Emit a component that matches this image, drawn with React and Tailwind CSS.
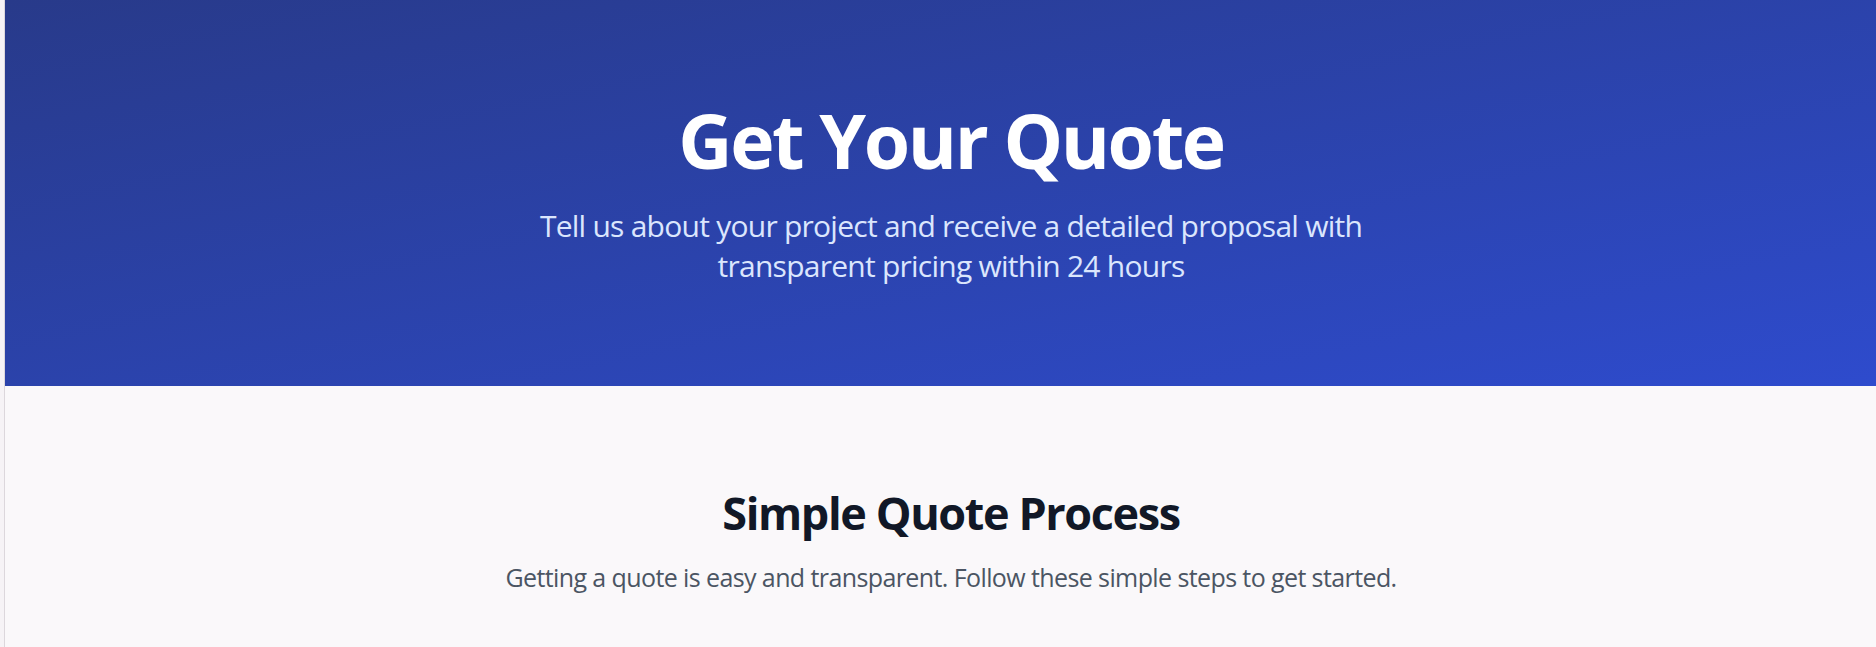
export default function App() {
  return (
    <div className="flex min-h-[647px] bg-[#faf8fa]" style={{ fontFamily: '"Open Sans", "Noto Sans", sans-serif' }}>
      <div className="w-[4px] shrink-0 bg-[#f6f3f6]" />
      <main className="flex-1 min-w-0 border-l border-[#dcd7dc]">
        <section className="bg-linear-to-br from-[#283a8a] to-[#2e4bcd] pt-[103px] pb-[100px] pl-[21px] text-center">
          <h1 className="text-[75px] leading-[75px] font-bold tracking-[-2.4px] text-white">Get Your Quote</h1>
          <p className="mx-auto mt-[28px] max-w-[840px] text-[30px] leading-[40px] tracking-[-0.75px] text-[#dbe6fd]">
            Tell us about your project and receive a detailed proposal with transparent pricing within 24 hours
          </p>
        </section>
        <section className="pt-[102px] pb-[60px] pl-[21px] text-center">
          <h2 className="text-[45px] leading-[50px] font-bold tracking-[-1.4px] text-[#111827]">Simple Quote Process</h2>
          <p className="mt-[22px] text-[25px] leading-[35px] tracking-[-0.6px] text-[#4b5563]">
            Getting a quote is easy and transparent. Follow these simple steps to get started.
          </p>
        </section>
      </main>
    </div>
  )
}
